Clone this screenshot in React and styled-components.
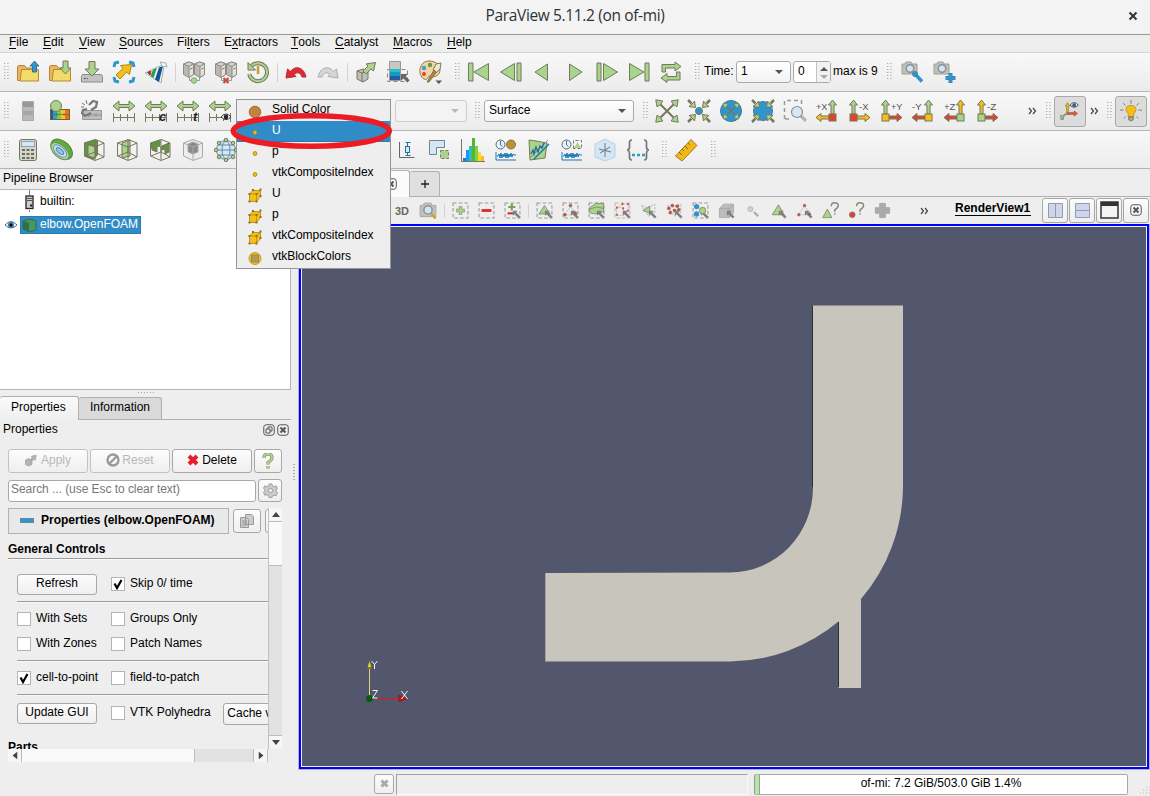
import React from "react";
import styled, { createGlobalStyle, css } from "styled-components";

const GlobalStyle = createGlobalStyle`
  *, *::before, *::after { box-sizing: border-box; }
  body {
    margin: 0;
    background: #eeeeee;
    font-family: "Liberation Sans", Arial, sans-serif;
    font-size: 12px;
    color: #000;
    overflow: hidden;
  }
`;

const G = "#a8d48d";
const S = "#77775b";
const Y = "#f6bf17";
const B = "#2f95cf";
const R = "#dd4433";

/* ---------- layout ---------- */

const Window = styled.div`
  position: relative;
  display: flex;
  flex-direction: column;
  width: 1150px;
  height: 796px;
  overflow: hidden;
  background: #eeeeee;
  white-space: nowrap;
`;

const TitleBar = styled.header`
  display: flex;
  align-items: center;
  justify-content: center;
  position: relative;
  height: 35px;
  flex: none;
  padding-bottom: 4px;
  background: #f3f3f3;
  border-bottom: 1px solid #9a9a8e;
  font: 15.5px "Open Sans", "Noto Sans", sans-serif;
  letter-spacing: -0.36px;
  color: #2c3336;
`;

const CloseGlyph = styled.span`
  position: absolute;
  right: 12px;
  top: 11px;
  display: flex;
`;

const MenuBar = styled.nav`
  display: flex;
  height: 18px;
  flex: none;
  padding-left: 9px;
  gap: 15px;
  line-height: 14px;
  border-bottom: 1px solid #d4d4d4;
`;

const MenuName = styled.span`
  width: ${(p) => p.$w}px;
  u {
    text-decoration: none;
    border-bottom: 1px solid #000;
    display: inline-block;
    height: 14px;
  }
`;

const ToolBar = styled.div`
  display: flex;
  align-items: center;
  height: ${(p) => p.$h || 39}px;
  flex: none;
  background: linear-gradient(#f8f8f8, #ececec);
  border-bottom: 1px solid #b4b4b4;
`;

const Grip = styled.i`
  flex: none;
  width: 5px;
  height: 18px;
  margin: 0 ${(p) => p.$r ?? 4}px 0 ${(p) => p.$l ?? 8}px;
  background: radial-gradient(circle at 0.5px 0.5px, #a8a8a8 0.6px, transparent 0.9px) 0 0 / 3.4px 3px;
`;

const Divider = styled.i`
  flex: none;
  width: 1px;
  height: ${(p) => p.$h || 19}px;
  margin: 0 ${(p) => p.$r ?? 2}px 0 ${(p) => p.$l ?? 3}px;
  background: #d2d2d2;
`;

const Tool = styled.span`
  flex: none;
  display: flex;
  align-items: center;
  justify-content: center;
  width: ${(p) => p.$w || 32}px;
  height: 31px;
  ${(p) =>
    p.$pressed &&
    css`
      background: #dcdcdc;
      border: 1px solid #a9a9a9;
      border-radius: 3px;
    `}
`;

const Spacer = styled.span`
  flex: none;
  width: ${(p) => p.$w}px;
`;

const More = styled.span`
  flex: none;
  width: ${(p) => p.$w || 12}px;
  display: flex;
  justify-content: center;
`;

const Combo = styled.span`
  flex: none;
  display: flex;
  align-items: center;
  justify-content: space-between;
  width: ${(p) => p.$w}px;
  height: 22px;
  padding: 0 ${(p) => p.$pr ?? 7}px 2px 4px;
  border: 1px solid ${(p) => (p.$off ? "#cdcdcd" : "#aaaaaa")};
  border-radius: 3px;
  background: ${(p) => (p.$off ? "#f3f3f3" : "linear-gradient(#fff, #f2f2f2)")};
`;

const Arrow = styled.i`
  width: 0;
  height: 0;
  margin-top: 2px;
  border: 4px solid transparent;
  border-bottom-width: 0;
  border-top-color: ${(p) => p.$c || "#555"};
  ${(p) => p.$up && "transform: rotate(180deg);"}
`;

const Spin = styled.span`
  display: flex;
  width: 38px;
  height: 22px;
  margin: 0 2px;
  border: 1px solid #aaa;
  border-radius: 3px;
  background: #fff;
  line-height: 18px;
  padding-left: 4px;
  justify-content: space-between;
`;

const SpinArrows = styled.span`
  display: flex;
  flex-direction: column;
  align-items: center;
  justify-content: center;
  gap: 2px;
  width: 14px;
  background: #f1f1f1;
  border-left: 1px solid #c4c4c4;
`;

const BarText = styled.span`
  flex: none;
  width: ${(p) => p.$w}px;
  padding-bottom: 2px;
`;

const Work = styled.main`
  display: flex;
  height: 601px;
  flex: none;
`;

const Dock = styled.aside`
  display: flex;
  flex-direction: column;
  width: 298px;
  flex: none;
`;

const DockTitle = styled.div`
  display: flex;
  justify-content: space-between;
  height: ${(p) => p.$h}px;
  padding: ${(p) => p.$pt}px 9px 0 3px;
  line-height: 14px;
  flex: none;
`;

const Tree = styled.div`
  width: 291px;
  height: 201px;
  flex: none;
  background: #fff;
  border: 1px solid #b5b5b5;
  border-left: 0;
`;

const TreeRow = styled.div`
  display: flex;
  align-items: center;
  height: 22px;
  margin-bottom: 2px;
  padding-left: ${(p) => p.$l}px;
`;

const TreeLabel = styled.span`
  display: flex;
  align-items: center;
  height: 18px;
  gap: 3px;
  line-height: 14px;
  ${(p) =>
    p.$on &&
    css`
      width: 121px;
      padding-left: 1px;
      background: #308cc6;
      color: #fff;
      border: 1px solid #2a7cb0;
    `}
  span { padding-bottom: ${(p) => (p.$on ? 3 : 1)}px; }
`;

const Splitter = styled.i`
  width: 18px;
  height: 1px;
  margin: 2px 0 2px 138px;
  flex: none;
  background: repeating-linear-gradient(90deg, #aaa 0 1px, transparent 1px 3px);
`;

const Tabs = styled.div`
  display: flex;
  align-items: flex-end;
  height: 25px;
  width: 291px;
  flex: none;
  border-bottom: 1px solid #b0b0b0;
`;

const Tab = styled.span`
  width: ${(p) => p.$w}px;
  height: ${(p) => (p.$on ? 24 : 22)}px;
  line-height: ${(p) => (p.$on ? 20 : 19)}px;
  padding-left: 11px;
  border: 1px solid #b0b0b0;
  border-bottom: 0;
  border-radius: 3px 3px 0 0;
  background: ${(p) => (p.$on ? "linear-gradient(#fafafa, #efefef)" : "#dadada")};
  ${(p) => (p.$on ? "border-left: 0; margin-bottom: -1px;" : "border-left: 0;")}
`;

const IconPair = styled.span`
  display: flex;
  gap: 2px;
`;

const Row = styled.div`
  display: flex;
  align-items: center;
  gap: ${(p) => p.$gap ?? 3}px;
  height: ${(p) => p.$h}px;
  margin: 0 0 ${(p) => p.$mb || 0}px ${(p) => p.$ml || 0}px;
  flex: none;
`;

const Button = styled.button`
  flex: none;
  display: flex;
  align-items: center;
  justify-content: center;
  gap: ${(p) => p.$gap ?? 3}px;
  width: ${(p) => p.$w}px;
  height: ${(p) => p.$h || 24}px;
  padding: 0 0 ${(p) => p.$pb ?? 1}px;
  border: 1px solid ${(p) => (p.disabled ? "#c2c2c2" : "#a8a8a8")};
  border-radius: 3px;
  background: linear-gradient(#fcfcfc, #efefef);
  font: inherit;
  line-height: 14px;
  color: ${(p) => (p.disabled ? "#b8b8b8" : "#000")};
  overflow: hidden;
`;

const SearchBox = styled.div`
  width: 248px;
  height: 22px;
  border: 1px solid #a8a8a8;
  border-radius: 3px;
  background: #fff;
  padding: 0 2px;
  line-height: 16px;
  letter-spacing: -0.05px;
  color: #777;
`;

const ScrollFrame = styled.div`
  display: grid;
  grid-template: 241px 13px / 260px 14px;
  margin-left: 8px;
`;

const Viewport = styled.div`
  overflow: hidden;
  display: flex;
  flex-direction: column;
`;

const SectionHead = styled.div`
  display: flex;
  flex: none;
  align-items: center;
  gap: 7px;
  width: 221px;
  height: 26px;
  padding: 0 0 2px 11px;
  border: 1px solid #b2b2b2;
  background: #e9e9e9;
  font-weight: bold;
`;

const Heading = styled.div`
  font-weight: bold;
  line-height: 14px;
  flex: none;
  margin-top: ${(p) => p.$mt}px;
`;

const Rule = styled.i`
  flex: none;
  height: 2px;
  margin: ${(p) => p.$t || 0}px 0 ${(p) => p.$b || 0}px ${(p) => p.$l || 0}px;
  border-top: 1px solid #9c9c9c;
  border-bottom: 1px solid #fafafa;
`;

const CheckLabel = styled.label`
  flex: none;
  display: flex;
  align-items: center;
  gap: 5px;
  width: ${(p) => p.$w || 94}px;
  margin-bottom: ${(p) => (p.$up ? 2 : 0)}px;
  line-height: 14px;
  span { padding-bottom: 2px; }
`;

const Box = styled.i`
  flex: none;
  display: flex;
  width: 14px;
  height: 14px;
  border: 1px solid #b4b4b4;
  background: #fff;
`;

const VBar = styled.div`
  display: flex;
  flex-direction: column;
  border-left: 1px solid #c0c0c0;
  background: #e2e2e2;
`;

const HBar = styled.div`
  display: flex;
  border-right: 1px solid #c0c0c0;
  background: #e2e2e2;
`;

const BarEnd = styled.span`
  flex: none;
  width: 13px;
  height: 13px;
  display: flex;
  align-items: center;
  justify-content: center;
  background: #f6f6f6;
  svg { transform: rotate(${(p) => p.$rot}deg); }
`;

const BottomEnd = styled.span`
  margin-top: auto;
  border-top: 1px solid #bcbcbc;
`;

const RightEnd = styled.span`
  margin-left: auto;
  border-left: 1px solid #bcbcbc;
`;

const Thumb = styled.span`
  flex: none;
  width: ${(p) => p.$w}px;
  height: ${(p) => p.$h}px;
  background: #fafafa;
  border: 0 solid #bcbcbc;
  border-width: ${(p) => (p.$vertical ? "1px 0" : "0 1px")};
`;

const Handle = styled.i`
  position: absolute;
  left: 293px;
  top: 464px;
  width: 2px;
  height: 17px;
  background: repeating-linear-gradient(#aaa 0 1px, transparent 1px 3px);
`;

const Center = styled.section`
  display: flex;
  flex-direction: column;
  width: 852px;
`;

const ViewTabs = styled.div`
  display: flex;
  align-items: flex-end;
  height: 28px;
  flex: none;
  border-bottom: 1px solid #b0b0b0;
`;

const ViewTab = styled.span`
  display: flex;
  align-items: center;
  justify-content: ${(p) => (p.$on ? "flex-end" : "center")};
  width: ${(p) => p.$w}px;
  height: ${(p) => (p.$on ? 27 : 25)}px;
  padding-right: ${(p) => (p.$on ? 12 : 0)}px;
  background: ${(p) => (p.$on ? "#fbfbfb" : "#e0e0e0")};
  border: 1px solid #b0b0b0;
  border-bottom: 0;
  border-radius: 3px 3px 0 0;
  ${(p) => (p.$on ? "margin-bottom: -1px;" : "border-left: 0;")}
`;

const ViewBar = styled.div`
  display: flex;
  align-items: center;
  height: 27px;
  flex: none;
  padding-left: 91px;
`;

const ViewName = styled.span`
  flex: none;
  width: 76px;
  margin: 0 11px 4px 23px;
  border-bottom: 1px solid #000;
  font-weight: bold;
  line-height: 14px;
`;

const RenderFrame = styled.div`
  height: 546px;
  border: 1px solid #b4b4b4;
  border-top: 0;
`;

const BlueFrame = styled.div`
  height: 545px;
  border: 2px solid #0000ff;
  background: #52576e;
  outline: 1px solid #f2f2f2;
  outline-offset: -3px;
  svg { display: block; }
`;

const StatusBar = styled.footer`
  display: flex;
  align-items: center;
  height: 26px;
  padding: 2px 0 0 374px;
`;

const StatusField = styled.div`
  width: 352px;
  height: 21px;
  margin: 0 6px 0 2px;
  border: 1px solid #fafafa;
  border-top-color: #a0a0a0;
  border-left-color: #a0a0a0;
`;

const Memory = styled.div`
  width: 373px;
  height: 21px;
  padding-right: 4px;
  border: 1px solid #a8a8a8;
  border-left: 4px solid #b7e2b0;
  border-radius: 2px;
  background: #fff;
  box-shadow: -1px 0 0 #8fa08b, inset 1px 0 0 #8ca887;
  margin-left: 1px;
  text-align: center;
  line-height: 17px;
`;

const Popup = styled.div`
  position: absolute;
  left: 236px;
  top: 99px;
  width: 155px;
  height: 170px;
  border: 1px solid #949494;
  background: #eeeeee;
`;

const Option = styled.div`
  display: flex;
  align-items: center;
  height: 21px;
  padding-left: 10px;
  gap: 9px;
  ${(p) => p.$on && "background: #308cc6; color: #fff; box-shadow: inset 0 -1px #2a7cb0;"}
  span { padding-bottom: 3px; line-height: 14px; letter-spacing: -0.03px; }
`;

const Ring = styled.svg`
  position: absolute;
  left: 229px;
  top: 112px;
`;

/* ---------- drawings ---------- */

const Svg = ({ s = 24, box = 24, children }) => (
  <svg width={s} height={s} viewBox={`0 0 ${box} ${box}`} fill="none" stroke={S} strokeWidth="1">
    {children}
  </svg>
);

const folder = (
  <>
    <path d="M1.500 20.500V6.500l1-1h6l2 2.500h9v3h-13l-2 9.500z" fill="#eeb462" stroke="#b38439" />
    <path d="M5.500 9.500h17v11.500h-18.500z" fill="#f3da69" stroke="#b08d35" />
  </>
);
const server = (x) => (
  <g transform={`translate(${x} 0)`} stroke="#8c8c82">
    <path d="M.5 4l5-2 5 1.500v11L6 17.500l-5.500-3z" fill="#b9b9b2" />
    <path d="M6 6.500l4.500-3v11L6 17.500z" fill="#e6dfe0" />
    <path d="M.5 4L6 6.500l4.500-3-5-1.500z" fill="#d4d4ce" />
    <path d="M7.500 9l2-1" stroke="#666" />
  </g>
);
const rule = (
  <>
    <path d="M1 7l6-5v3.500h10V2l6 5-6 5V8.500H7V12z" fill={G} />
    <path d="M1 18.500h22M1.500 14v9M8.500 15v7M15.500 15v7M22.500 14v9" />
  </>
);
const iconText = (t, x, y, size) => (
  <text x={x} y={y} fill="#222" stroke="none" fontSize={size} fontWeight="bold" fontStyle="italic" fontFamily="Liberation Sans, sans-serif">{t}</text>
);
const eye = (x, y, c = "#222") => (
  <g>
    <path d={`M${x - 5} ${y}q5-6 10 0q-5 5-10 0z`} fill="#fff" stroke="#333" />
    <circle cx={x} cy={y} r="2.300" fill={c} stroke="none" />
  </g>
);
const cube = (
  <path d="M2.500 5l11-3.500L22 5v14l-9 3.500L2.500 18zM2.500 5l10.500 4 9-4M13 9v13M13 1.500V14l-10 4M13 14l9 5" />
);
const dots = (c = "#999") => <rect x="1.500" y="1.500" width="21" height="21" stroke={c} strokeDasharray="5 3" strokeWidth="1.500" />;
const pointer = <path d="M12.500 12.500h7l-2.200 2.200 6 6-2.500 2.500-6-6-2.300 2.300z" stroke="none" fill="#808080" />;
const wave = <path d="M2 14v8h20M3 18h1l1-2 1 4 1-5 1 5 1-4 1 3 1-4 1 5 1-5 1 5 1-4 1 3 1-4 1 4 1-3 1 1h2" stroke="#1874b8" />;
const clock = (
  <g>
    <circle cx="6.500" cy="6.500" r="4.500" fill="#e5f1fb" stroke="#666" />
    <path d="M6.500 3v4l2 1.500" stroke="#2a7ab8" />
  </g>
);
const camera = (
  <g>
    <path d="M1 4h3l1-2h5l1 2h5v10H1z" fill="#c2c2bd" stroke="#9c9c96" />
    <circle cx="9" cy="8.500" r="3.800" fill="#cfe6f7" stroke="#8a9090" strokeWidth="1.500" />
  </g>
);
const lens = (x, y, r, c = "#777") => (
  <g>
    <path d={`M${x + r * 0.7} ${y + r * 0.7}l5 5`} stroke={c} strokeWidth="3" />
    <circle cx={x} cy={y} r={r} fill="#d4e8f8" stroke="#8b8f92" strokeWidth="1.200" />
  </g>
);
const corners = (inward) =>
  [0, 90, 180, 270].map((a) => (
    <g key={a} transform={`rotate(${a} 12 12)`}>
      {inward ? (
        <>
          <path d="M1 1l3.500 3.500" strokeWidth="2.500" />
          <path d="M8.500 8.500L2 7.500l2-1.500 2-2 1.500-2z" fill={G} />
        </>
      ) : (
        <>
          <path d="M12 12L5 5" strokeWidth="2" />
          <path d="M.8.800l7 1.200L5.500 5.500 2 7.800z" fill={G} />
        </>
      )}
    </g>
  ));

/* Camera direction icons: label, vertical arrow, horizontal arrow and origin block */
const Axis = ({ label, left, up, side, box }) => (
  <Svg>
    <g transform={left ? "" : "translate(24 0) scale(-1 1)"}>
      <path d="M16 15V6h-2.500L17.500 1l4 5H19v9z" fill={up} />
      <path d="M14 17H6v-2.500L1 18.500l5 4V20h8z" fill={side} />
      <rect x="14" y="15" width="7" height="7" fill={box} />
    </g>
    <text x={left ? 1 : 12} y="11" fill="#555" stroke="none" fontSize="9.500" textLength={label[0] === "+" ? 11.5 : 9.500} lengthAdjust="spacingAndGlyphs" fontFamily="Liberation Sans, sans-serif">{label}</text>
  </Svg>
);

const icons = {
  open: <>{folder}<path d="M16.500 12V6H14l4.500-5L23 6h-2.500v6z" fill={B} stroke="#3d6f8c" /></>,
  recent: <>{folder}<path d="M15 1h5v7h3l-5.500 6-5.500-6h3z" fill={G} /></>,
  save: (
    <>
      <path d="M2.500 14.500h19l1 2v5.500H1.500v-5.500z" fill="#c2c2c2" stroke="#8c8c8c" />
      <path d="M4 18.500h2M7 18.500h1" stroke="#555" />
      <path d="M9 1.500h6V9h4l-7 7-7-7h4z" fill={G} />
    </>
  ),
  extracts: (
    <>
      <path d="M2 7l1-4 4-1M17 2l4 1 1 4M22 17l-1 4-4 1M7 22l-4-1-1-4" stroke={B} strokeWidth="3" />
      <path d="M19.500 4.500l-2 10-3-2.500L8 19l-4-4 7-6.500-2.500-3z" fill={Y} stroke="#a88420" />
    </>
  ),
  catalyst: (
    <>
      <path d="M1 13L18 5l-2-3 6 1 1 4-3-1-3 17z" fill="#f2f7f6" stroke="#9fb2b2" />
      <path d="M3.500 12.500L7 11l-1 4z" fill="#c8202c" stroke="#c8202c" />
      <path d="M9 9.500l4-1.500-3.500 10-3-2z" fill="#27a04a" stroke="none" />
      <path d="M15 7.500l4-1.500-4 16-4-2.500z" fill="#12528f" stroke="none" />
    </>
  ),
  connect: <>{server(1)}{server(12)}<path d="M7.500 17v3.500h10V17" stroke="#999" /><circle cx="12" cy="20.500" r="2.800" fill={G} stroke="#83a870" /></>,
  disconnect: <>{server(1)}{server(12)}<path d="M7.500 17v3.500h10V17" stroke="#999" /><path d="M9.500 18l5 5m0-5l-5 5" stroke="#c94a40" strokeWidth="2.200" /></>,
  reset: (
    <>
      <path d="M5 6.500A9 9 0 1 1 3.200 14" stroke={S} strokeWidth="4" />
      <path d="M5 6.500A9 9 0 1 1 3.200 14" stroke={G} strokeWidth="2" />
      <path d="M2 2.500v7.500h7.500z" fill={G} />
      <path d="M12 6v8" stroke="#c99a2d" strokeWidth="2.500" />
    </>
  ),
  undo: <path d="M2 18L3.500 9l3 2.500C11 5 20 7 22 17h-4c-1.500-5-5.500-5-8-2.500l2 2z" fill="#e8242c" stroke="#a5343a" />,
  redo: <path d="M22 18L20.500 9l-3 2.500C13 5 4 7 2 17h4c1.500-5 5.500-5 8-2.500l-2 2z" fill="#d5d5d5" stroke="#adadad" />,
  autoApply: (
    <>
      <path d="M3 11l6-2 5 2v8l-5 3-6-3z" fill="#bfbfba" />
      <path d="M3 11l5 2 6-2M8 13v9" />
      <path d="M21.500 2.500l-2 8.500-2.500-2-5 5-3-3 5-5-2-2z" fill={G} />
    </>
  ),
  colormap: (
    <>
      <rect x="1.500" y="9.500" width="20" height="12" stroke="#888" strokeDasharray="4 3" />
      <path d="M3.500 1.500h11v19h-11z" fill="#c7c7c7" stroke="#999" />
      <path d="M4 9h10v4H4z" fill="#28bfc6" stroke="none" />
      <path d="M4 12h10v4H4z" fill="#1697c5" stroke="none" />
      <path d="M4 16h10v4H4z" fill="#285b9e" stroke="none" />
      <path d="M15 14h7l-2.300 2.300 4 4-2.300 2.300-4-4L15 21z" fill="#666" stroke="none" />
    </>
  ),
  palette: (
    <>
      <path d="M11 1C1 1-1 15 6 19c4 2 3-3 6-3 5 2 10-1 10-6 0-6-5-9-11-9z" fill="#f2d6a7" stroke="#8b7654" />
      <circle cx="6" cy="8" r="2.200" fill="#39a2d1" stroke="none" />
      <circle cx="12" cy="5" r="2.200" fill="#6d973e" stroke="none" />
      <circle cx="6" cy="14" r="2" fill={R} stroke="none" />
      <path d="M15 10l3-6 5-1-1 6-4 4z" fill="#f1e9ce" />
      <path d="M9 22l7-12 2.500 2L11 22z" fill="#b88626" />
      <path d="M17.500 20.500h6.500l-3.200 3.500z" fill="#555" stroke="none" />
    </>
  ),
  first: <><path d="M1.500 3h4.500v18H1.500z" fill={G} /><path d="M21.500 3.500v17L7 12z" fill={G} /></>,
  previous: <><path d="M18 3h4v18h-4z" fill={G} /><path d="M15.500 3.500v17L1.500 12z" fill={G} /></>,
  reverse: <path d="M16.500 4v16.500L4 12z" fill={G} />,
  play: <path d="M6.500 4v16.500L19 12z" fill={G} />,
  next: <><path d="M2 3h4v18H2z" fill={G} /><path d="M8.500 3.500v17l14-8.500z" fill={G} /></>,
  last: <><path d="M18 3h4v18h-4z" fill={G} /><path d="M2.500 3.500v17L17 12z" fill={G} /></>,
  loop: <path d="M3 12V4.500h13V2l6 4.500L16 11V8H6.500v4zM21 12v8H8v2.500L2 18l6-4.500v3h9.500V12z" fill={G} />,
  cameraLink: <>{camera}<path d="M14 14l7 7.500" stroke={B} strokeWidth="3.500" /><circle cx="14" cy="14" r="2.500" fill={B} stroke="#3c7fa7" /></>,
  cameraAdd: <>{camera}<path d="M17.500 13v10M12.500 18h10" stroke="#3c7fa7" strokeWidth="4" /><path d="M17.500 13.500v9M13 18h9" stroke={B} strokeWidth="3" /></>,
  legend: (
    <>
      <path d="M6.500 2.500h11v19h-11z" fill="#b9b9b9" stroke="#aaa" />
      <path d="M7 3h10v5H7z" fill="#999" stroke="none" />
      <path d="M7 12h10v4H7z" fill="#a6a6a6" stroke="none" />
    </>
  ),
  editMap: (
    <>
      <path d="M2 10h3v11H2z" fill="#28539d" stroke="none" />
      <path d="M5 10h4v11H5z" fill="#24a7c2" stroke="none" />
      <path d="M9 10h4v11H9z" fill="#89c45b" stroke="none" />
      <path d="M13 10h4v11h-4z" fill="#f2c82b" stroke="none" />
      <path d="M17 10h5v11h-5z" fill="#e67226" stroke="none" />
      <path d="M2.500 10.500h19v10h-19z" stroke="#75603a" />
      <path d="M2 15.500h20M9 14v3M16 14v3" stroke="#75603a" strokeOpacity=".7" />
      <circle cx="8" cy="7" r="5.500" fill={G} />
    </>
  ),
  separateMap: (
    <>
      <path d="M2.500 11.500h19v9h-19z" fill="#bdbdbd" stroke="#999" />
      <path d="M2 16h20M9 14v4M16 14v4" stroke="#929292" />
      <path d="M7 10l-4 1-1 3 3 3 6-3M9 6l4-4 4 1-1 5-5 3" stroke="#777" strokeWidth="2.200" />
      <path d="M2 4l3 2M6 1l1 4M1 8h3" stroke="#777" />
    </>
  ),
  range: rule,
  rangeCustom: <>{rule}{iconText("c", 15, 21.5, 13)}</>,
  rangeTime: <>{rule}{iconText("t", 17, 21.5, 13)}</>,
  rangeVisible: <>{rule}{eye(18, 18)}</>,
  resetCamera: corners(false),
  zoomData: <><circle cx="12" cy="12" r="3.500" fill={B} />{corners(true)}</>,
  resetClosest: <><circle cx="12" cy="12" r="10.500" fill={B} stroke="#477991" /><g transform="translate(3.600 3.600) scale(.7)">{corners(false)}</g></>,
  zoomClosest: <><circle cx="12" cy="12" r="9.500" fill={B} stroke="#477991" />{corners(true)}</>,
  zoomBox: <><path d="M1.500 20V1.500h17V8M2 20h6" stroke="#999" strokeDasharray="4 3" strokeWidth="1.500" />{lens(14, 13, 5.5, "#b2b2b2")}</>,
  orientation: (
    <>
      <path d="M8 16V6H6.500L9 2l2.500 4H10v10z" fill={Y} stroke="#9b823f" />
      <path d="M9 14h8v-2l4 3-4 3v-2H9z" fill="#e75d36" stroke="#a65843" />
      <path d="M9 15l-5 4v3H1v-5l2 1 5-4z" fill={G} />
      {eye(17, 5, "#345aa1")}
    </>
  ),
  light: (
    <>
      <path d="M12 0v4M3.500 3.500L6 6M20.500 3.500L18 6M0 11h4M20 11h4M4 20l2-2M20 20l-2-2" stroke="#777" />
      <path d="M9 18v-3c-4-4-3-9 3-9s7 5 3 9v3z" fill={Y} stroke="#bd922d" />
      <path d="M9.500 18.500h5v3l-2.500 1.500-2.500-1.500z" fill="#aaa" />
    </>
  ),
  calculator: (
    <>
      <rect x="3.500" y="1.500" width="17" height="21" rx="2" fill="#d4d4d0" />
      <rect x="5.500" y="3.500" width="13" height="5" fill="#d1e8fa" stroke="#91a3ad" />
      {[6, 10.5, 15].map((x) => [11, 15, 19].map((y) => <rect key={`${x}-${y}`} x={x} y={y} width="3" height="2" fill="#707051" stroke="none" />))}
    </>
  ),
  contour: (
    <g transform="rotate(42 12 12)">
      <ellipse cx="12" cy="11" rx="12.500" ry="8" fill="#5fae3b" stroke="#587c3b" />
      <ellipse cx="12" cy="13.500" rx="11" ry="6" fill="#a9d69a" stroke="#6f8f55" />
      <ellipse cx="12" cy="13.500" rx="8" ry="4.300" fill="#c5dff0" stroke="#6c9ab5" />
      <ellipse cx="12" cy="13.500" rx="4.500" ry="2" fill="#9cc8e4" stroke="#4a83a2" />
    </g>
  ),
  clip: <><path d="M2.500 5l10-3 3 1v14l-4 4-9-3z" fill="#629440" /><path d="M6 7l8 1-1 12-7-2z" fill={G} />{cube}</>,
  slice: <><path d="M7 5l8-3v16l-8 2z" fill={G} />{cube}</>,
  threshold: <>{cube}<path d="M3 5l9-3v5l-3 2v5l-5-2zM14 8l7-3v9l-4 2v-5l-3 1z" fill="#629440" /></>,
  extract: (
    <g stroke="#aaa">
      <path d="M2.500 5l9.500-3.500L21.500 5v14L12 22.500 2.500 18z" fill="#ececec" />
      <path d="M7 6l5-2 5 2v8l-5 2-5-2z" fill="#8a8a8a" />
      <path d="M2.500 5L12 9l9.500-4M12 9v13" />
    </g>
  ),
  glyph: (
    <>
      <circle cx="12" cy="12" r="9.500" fill="#d4e9f8" stroke="#628aa1" />
      <ellipse cx="12" cy="12" rx="4" ry="9" stroke="#628aa1" />
      <path d="M2 12h20M4 7h16M4 17h16" stroke="#628aa1" />
      {[[12, 2], [2, 12], [22, 12], [12, 22], [5, 5], [19, 5], [5, 19], [19, 19]].map(([x, y]) => <circle key={`${x}-${y}`} cx={x} cy={y} r="1.800" fill={G} />)}
    </>
  ),
  boxPlot: <><path d="M4.500 4v15.500h15" stroke="#666" /><path d="M12.500 4v14M10.500 4.500h5M10.500 17.500h5" stroke="#236f9e" /><rect x="10.500" y="8.500" width="4" height="6" fill="#d2e9fa" stroke="#236f9e" /></>,
  subset: <><path d="M1.500 2.500h15v7h-8v7h-7z" fill="#d3e7f8" stroke="#70868d" /><rect x="12.500" y="12.500" width="8" height="8" fill={G} strokeDasharray="3 2" /></>,
  histogram: (
    <>
      {[["#087ef3", 2, 20, 3], ["#1b93ff", 5, 12, 3], ["#31bfae", 8, 8, 3], ["#54b639", 11, 0, 3], ["#85cf41", 14, 8, 3], ["#f8db28", 17, 14, 3], ["#ffb82d", 20, 18, 3]].map(([c, x, y, w]) => <rect key={x} x={x} y={y} width={w} height={23 - y} fill={c} stroke="none" />)}
      <path d="M.5 1v22.500H24" />
    </>
  ),
  plotTime: <>{clock}{wave}<circle cx="17" cy="6.500" r="4.500" fill="#bd912c" /></>,
  plotLine: (
    <>
      <path d="M2 2l7 1 11 2-2 15-15 2z" fill={G} />
      <path d="M3 20L21 2" stroke="#8f9a6a" />
      <path d="M4 16l2-4 1 4 2-7 2 5 2-6 2 2 2-5" stroke="#216ba0" strokeWidth="1.300" />
      <path d="M7 21L22 6" stroke="#1874b8" strokeWidth="1.500" />
    </>
  ),
  plotSelection: <>{clock}{wave}<path d="M13.500 10.500v-8h8v8z" strokeDasharray="3 2" /><path d="M14 10l3.500-6 3.500 6z" fill={G} stroke="none" /></>,
  probe: <><path d="M2 6l10-5 10 5v13l-10 4-10-4z" fill="#d3e7f8" stroke="#bdd0dd" /><path d="M12 5v14M6 11l12 3M7 15l10-6" stroke="#68777d" /></>,
  python: (
    <>
      <path d="M6 2Q3 2 3.500 6v3q0 3-2.500 3 2.500 0 2.500 4v2Q3 22 6 22M18 2q3 0 2.500 4v3q0 3 2.500 3-2.500 0-2.500 4v2q.5 4-2.500 4" stroke="#777" strokeWidth="1.700" />
      <path d="M6 17h3m2 0h3m2 0h3" stroke="#31a0b9" strokeWidth="2.500" />
    </>
  ),
  ruler: <><path d="M1.500 18L17 1.500l6 6L8 23z" fill="#f0b916" stroke="#a77b21" /><path d="M5 14l3 3M8 11l2 2M11 8l3 3M14 5l2 2" stroke="#91651a" /></>,
};

const Ico = ({ n, s = 24 }) => <Svg s={s}>{icons[n]}</Svg>;

const selectTools = {
  pick: <>{<path d="M1.500 4.500h4l1.500-3h9l1.500 3h5v15h-21z" fill="#c2c2bd" stroke="#9c9c96" />}<path d="M16 15l6 7" stroke="#d0a03a" strokeWidth="3.500" /><circle cx="12" cy="10.500" r="5.500" fill="#cfe6f7" stroke="#8a9090" strokeWidth="2" /></>,
  add: <>{dots()}<path d="M12 6v12M6 12h12" stroke="#7d9a62" strokeWidth="5" /><path d="M12 7v10M7 12h10" stroke={G} strokeWidth="3" /></>,
  sub: <>{dots()}<path d="M5 12h14" stroke="#e12b29" strokeWidth="4" /></>,
  toggle: <>{dots()}<path d="M11 2v10M6 7h10" stroke="#74a25e" strokeWidth="3" /><path d="M5 16h9" stroke="#e12b29" strokeWidth="3" />{pointer}</>,
  cells: <>{dots()}<path d="M4 17L12 5l8 12z" fill={G} />{pointer}</>,
  points: <>{dots()}<path d="M4 18L12 6l8 12z" stroke="#bbb" />{pointer}{[[4, 18], [12, 5], [19, 16]].map(([x, y]) => <circle key={x} cx={x} cy={y} r="2" fill={R} />)}</>,
  cellsThrough: <>{dots()}<path d="M2 8l9-6h11v12l-13 3-7-2z" fill={G} /><path d="M2 10l10-3 10 2" />{pointer}</>,
  pointsThrough: <>{dots("#bbb")}<path d="M4 8l8-5h8v12l-8 4H4zM4 8h9v10" stroke="#bbb" />{[[4, 8], [12, 3], [20, 3], [4, 18], [20, 12], [13, 9]].map(([x, y]) => <circle key={`${x}-${y}`} cx={x} cy={y} r="1.500" fill={R} stroke="none" />)}{pointer}</>,
  polyCells: <><path d="M2 5l8 3 11-5v12l-9 5z" stroke="#999" strokeDasharray="3 2" /><path d="M4 12l10-6v10z" fill={G} />{pointer}</>,
  polyPoints: <><path d="M2 5l8 2 11-4v12l-9 5z" stroke="#999" strokeDasharray="3 2" />{[[4, 9], [9, 5], [12, 12], [6, 15], [16, 6], [18, 11]].map(([x, y]) => <circle key={x} cx={x} cy={y} r="2" fill={R} stroke="#875e52" />)}{pointer}</>,
  block: <>{dots()}{pointer}<circle cx="6.500" cy="6.500" r="3.800" fill={B} stroke="none" /><circle cx="6.500" cy="17" r="3.800" fill={B} stroke="none" /><circle cx="15" cy="12" r="4.500" fill={G} /></>,
  blockOff: <><path d="M2 9l6-6h14v12l-6 7H2z" fill="#bcbcbc" stroke="#a0a0a0" /><path d="M2 9h14v13M16 9l6-6" stroke="#a0a0a0" />{pointer}</>,
  hoverOff: <><circle cx="9" cy="10" r="3.500" fill="#d1d1d1" stroke="#aaa" /><path d="M14 14l6 6" stroke="#aaa" strokeWidth="3" /></>,
  interactCells: <><path d="M3 18L12 4l8 14z" fill={G} />{pointer}</>,
  interactPoints: <><path d="M4 18L12 5l8 13z" stroke="#bbb" />{pointer}{[[4, 18], [12, 5], [19, 17]].map(([x, y]) => <circle key={x} cx={x} cy={y} r="1.800" fill={R} />)}</>,
  hoverCells: <><path d="M1 22L7.500 10 14 22z" fill={G} /><path d="M13 6q0-5 5-5t5 4q0 3-5 6v3m0 2v2" stroke="#888873" strokeWidth="2" /></>,
  hoverPoints: <><circle cx="6" cy="18" r="4" fill={R} /><path d="M12 6q0-5 5-5t5 4q0 3-5 6v3m0 2v2" stroke="#888873" strokeWidth="2" /></>,
  grow: <path d="M8 2h8v6h6v8h-6v6H8v-6H2V8h6z" fill="#aaa" stroke="#999" />,
};

const SmallX = () => (
  <svg width="12" height="12" viewBox="0 0 12 12" fill="none" stroke="#555">
    <rect x=".75" y=".75" width="10.500" height="10.500" rx="2.500" />
    <path d="M3.500 3.500l5 5m0-5l-5 5" strokeWidth="2" />
  </svg>
);
const Chevrons = () => (
  <svg width="9" height="8" viewBox="0 0 9 8" fill="none" stroke="#444" strokeWidth="1.200"><path d="M1 1l2.500 3L1 7M5 1l2.500 3L5 7" /></svg>
);
const Triangle = () => <svg width="8" height="5" viewBox="0 0 8 5"><path d="M0 5l4-5 4 5z" fill="#444" /></svg>;
const Cross = ({ c = "#e6202a", s = 12 }) => (
  <svg width={s} height={s} viewBox="0 0 12 12" stroke={c} strokeWidth="4"><path d="M2 2l8 8M10 2l-8 8" /></svg>
);

const fieldIcons = {
  solid: <circle cx="8" cy="9" r="5.800" fill="#c5813e" stroke="#9c7145" />,
  point: <circle cx="8" cy="8.500" r="1.900" fill={Y} stroke="#b48b1c" />,
  cell: (
    <>
      <path d="M2.500 7L6 3.500h7.500V9.500L9.500 14.500H2.500z" fill={Y} stroke="#c4951c" />
      <path d="M2.500 7h7v7.500M9.500 7l4-3.500" stroke="#c4951c" />
      {[[2.5, 7], [6, 3], [13.5, 2.5], [13.5, 9], [9.5, 14.5], [2.5, 14.5], [9.5, 7]].map(([x, y]) => <rect key={`${x}-${y}`} x={x - 1} y={y - 1} width="2" height="2" fill="#87702d" stroke="none" />)}
    </>
  ),
  block: <><circle cx="8" cy="8.500" r="6" fill={Y} stroke="#c79b32" /><rect x="4.500" y="5" width="7" height="7" fill="#ab9c60" stroke="#9b8b51" /></>,
};

/* ---------- parts ---------- */

const tools = (names, w) => names.map((n) => <Tool key={n} $w={w}><Ico n={n} /></Tool>);

const menus = [["F", "ile", 19], ["E", "dit", 21], ["V", "iew", 25], ["S", "ources", 43], ["", "Fi", 32, "l", "ters"], ["", "E", 52, "x", "tractors"], ["T", "ools", 29], ["C", "atalyst", 43], ["M", "acros", 39], ["H", "elp", 25]];

const fields = [["solid", "Solid Color"], ["point", "U"], ["point", "p"], ["point", "vtkCompositeIndex"], ["cell", "U"], ["cell", "p"], ["cell", "vtkCompositeIndex"], ["block", "vtkBlockColors"]];

const Check = ({ on, w, up, children }) => (
  <CheckLabel $w={w} $up={up}>
    <Box>{on && <svg width="12" height="12" viewBox="0 0 12 12" fill="none" stroke="#000" strokeWidth="2.200"><path d="M2.500 5.500l2.500 4.500L9.500 2" /></svg>}</Box>
    <span>{children}</span>
  </CheckLabel>
);

const Scene = () => (
  <svg width="846" height="541" viewBox="301 226 846 541">
    <path d="M813 305.500H903V487A173 174 0 0 1 861 599V688H838.500V621.500A173 174 0 0 1 730 661.500H545V573L730 572.500A83 85 0 0 0 813 487Z" fill="#c8c5bc" />
    <path d="M812.500 306V487M838.500 622V687" stroke="#2d2f39" />
    <path d="M545.500 573V661" stroke="#a3a29f" />
    <path d="M369.500 697V668" stroke="#d4d27a" />
    <path d="M367 669l2.500-8 2.500 8z" fill="#d9d51b" />
    <path d="M367 668h5" stroke="#222" />
    <path d="M371 698.500H400" stroke="#f01010" />
    <path d="M399 695.500v6l8-3z" fill="#d51616" stroke="#600" strokeWidth=".5" />
    <circle cx="369.500" cy="698.500" r="3.500" fill="#075c12" />
    <g fill="none" stroke="#f4f4f4">
      <path d="M371.500 661l3 3.500 3-3.500M374.500 664v5M372.500 690.500h5l-5 7.500h5M401.500 691l6 8M407.500 691l-6 8" />
    </g>
  </svg>
);

const PropertiesPanel = () => (
  <>
    <Tabs>
      <Tab $on $w={79}>Properties</Tab>
      <Tab $w={83}>Information</Tab>
    </Tabs>
    <DockTitle $h={29} $pt={2}>
      Properties
      <IconPair>
        <svg width="12" height="18" viewBox="0 -2 12 18" fill="none" stroke="#555"><rect x=".75" y=".75" width="10.500" height="10.500" rx="2.500" /><path d="M5 5V3h4v4H7M3 5h4v4H3z" /></svg>
        <svg width="12" height="18" viewBox="0 -2 12 18" fill="none" stroke="#555"><rect x=".75" y=".75" width="10.500" height="10.500" rx="2.500" /><path d="M3.500 3.500l5 5m0-5l-5 5" strokeWidth="2" /></svg>
      </IconPair>
    </DockTitle>
    <Row $h={24} $mb={6} $ml={8} $gap={2}>
      <Button $w={80} $pb={2} $gap={4} disabled>
        <svg width="12" height="13" viewBox="0 0 24 24" fill="#b5b5b5" stroke="#a2a2a2" strokeWidth="1.500"><path d="M1 11l6-3 7 3v9l-7 3-6-3zM22.500 1.500l-2 10-3-2-5 5-3-3 5-5-2-3z" /></svg>Apply
      </Button>
      <Button $w={80} $pb={2} $gap={2} disabled>
        <svg width="14" height="14" viewBox="0 0 14 14" fill="none" stroke="#999" strokeWidth="2.300"><circle cx="7" cy="7" r="5.500" /><path d="M3 11l8-8" /></svg>Reset
      </Button>
      <Button $w={80} $pb={2}><Cross />Delete</Button>
      <Button $w={28}>
        <svg width="12" height="16" viewBox="0 0 12 16" fill="none"><path d="M2 5q0-4 4-4t4 4q0 2-4 4.500v2m0 1.500v2.500" stroke={S} strokeWidth="3" /><path d="M2 5q0-4 4-4t4 4q0 2-4 4.500v2m0 1.500v2.500" stroke={G} strokeWidth="2" /></svg>
      </Button>
    </Row>
    <Row $h={23} $mb={6} $ml={8} $gap={2}>
      <SearchBox>Search ... (use Esc to clear text)</SearchBox>
      <Button $w={24} $h={23}>
        <svg width="15" height="15" viewBox="0 0 16 16" fill="#ccc" stroke="#999"><path d="M6.500 1h3l.5 2 2 1 2-1 1.500 3-1.500 1.500v1.500l1.500 1.500-1.500 3-2-.5-2 1-.5 1.500h-3L6 13.500l-2-1-2 .5-1.500-3L2 8.500V7L.5 5.500 2 3l2 1 2-1z" /><circle cx="8" cy="8" r="2.300" fill="#eee" /></svg>
      </Button>
    </Row>
    <ScrollFrame>
      <Viewport>
        <Row $h={26} $gap={4}>
          <SectionHead>
            <svg width="14" height="5" viewBox="0 0 14 5"><rect x=".5" y=".5" width="13" height="4" fill={B} stroke="#66899b" /></svg>
            Properties (elbow.OpenFOAM)
          </SectionHead>
          <Button $w={28}>
            <svg width="16" height="16" viewBox="0 0 16 16" fill="#ccc" stroke="#999"><path d="M6.500 1.500h6l2 2v8h-8zM1.500 4.500h6l2 2v8h-8zM3 8h5M3 10h5M3 12h4" /></svg>
          </Button>
          <Button $w={28} />
        </Row>
        <Heading $mt={8}>General Controls</Heading>
        <Rule $t={2} $b={14} />
        <Row $h={21} $ml={9} $gap={14}>
          <Button $w={80} $h={21} $pb={3}>Refresh</Button><Check on up>Skip 0/ time</Check>
        </Row>
        <Rule $t={6} $b={8} $l={9} />
        <Row $h={16} $ml={9} $gap={0}><Check>With Sets</Check><Check>Groups Only</Check></Row>
        <Row $h={34} $ml={9} $gap={0}><Check>With Zones</Check><Check>Patch Names</Check></Row>
        <Rule $t={-1} $b={8} $l={9} />
        <Row $h={16} $mb={2} $ml={9} $gap={0}><Check on>cell-to-point</Check><Check>field-to-patch</Check></Row>
        <Rule $t={6} $b={7} $l={9} />
        <Row $h={21} $ml={9} $gap={14}>
          <Button $w={80} $h={21} $pb={3}>Update GUI</Button><Check w={98} up>VTK Polyhedra</Check>
          <Button $w={62} $h={22} $pb={2}>Cache vtk</Button>
        </Row>
        <Heading $mt={16}>Parts</Heading>
      </Viewport>
      <VBar>
        <BarEnd $rot={0}><Triangle /></BarEnd>
        <Thumb $w={13} $h={45} $vertical />
        <BottomEnd><BarEnd $rot={180}><Triangle /></BarEnd></BottomEnd>
      </VBar>
      <HBar>
        <BarEnd $rot={-90}><Triangle /></BarEnd>
        <Thumb $w={174} $h={13} />
        <RightEnd><BarEnd $rot={90}><Triangle /></BarEnd></RightEnd>
      </HBar>
    </ScrollFrame>
  </>
);

const viewTool = (n, s = 17) => <Tool key={n} $w={26}><Svg s={s}>{selectTools[n]}</Svg></Tool>;

const LayoutButtons = () => (
  <Row $h={25} $gap={1}>
    <Button $w={26} $h={25}><svg width="15" height="15" viewBox="0 0 15 15"><path d="M.5.500h14v14H.5zM7.500 1v13" fill="#cfd6ec" stroke="#939bb0" /></svg></Button>
    <Button $w={26} $h={25}><svg width="15" height="15" viewBox="0 0 15 15"><path d="M.5.500h14v14H.5zM1 7.500h13" fill="#cfd6ec" stroke="#939bb0" /></svg></Button>
    <Button $w={26} $h={25}><svg width="19" height="18" viewBox="0 0 19 18"><path d="M1 1h17v16H1z" fill="#f3f3f3" stroke="#333" strokeWidth="1.500" /><path d="M1 1h17v4H1z" fill="#333" /></svg></Button>
    <Button $w={26} $h={25}><SmallX /></Button>
  </Row>
);

export default function App() {
  return (
    <Window>
      <GlobalStyle />
      <TitleBar>
        ParaView 5.11.2 (on of-mi)
        <CloseGlyph><svg width="10" height="10" viewBox="0 0 10 10" stroke="#333" strokeWidth="2"><path d="M1.500 1.500l7 7m0-7l-7 7" /></svg></CloseGlyph>
      </TitleBar>
      <MenuBar>
        {menus.map(([a, b, w, c, d]) => (
          <MenuName key={a + b} $w={w}>{a && <u>{a}</u>}{b}{c && <u>{c}</u>}{d}</MenuName>
        ))}
      </MenuBar>

      <ToolBar>
        <Grip $l={4} $r={3} />
        {tools(["open", "recent", "save", "extracts", "catalyst"])}
        <Divider />
        {tools(["connect", "disconnect", "reset"])}
        <Divider />
        {tools(["undo", "redo"])}
        <Divider />
        {tools(["autoApply", "colormap", "palette"])}
        <Grip $l={9} $r={3} />
        {tools(["first", "previous", "reverse", "play", "next", "last", "loop"])}
        <Grip />
        <BarText $w={32}>Time:</BarText>
        <Combo $w={55}>1<Arrow /></Combo>
        <Spin>0<SpinArrows><Arrow $up /><Arrow $c="#aaa" /></SpinArrows></Spin>
        <BarText $w={46}>max is 9</BarText>
        <Grip $l={8} $r={5} />
        {tools(["cameraLink", "cameraAdd"])}
      </ToolBar>

      <ToolBar>
        <Grip $l={4} $r={3} />
        {tools(["legend", "editMap", "separateMap", "range", "rangeCustom", "rangeTime", "rangeVisible"])}
        <Spacer $w={159} />
        <Combo $w={72} $off><span /><Arrow $c="#bbb" /></Combo>
        <Grip $l={8} />
        <Combo $w={150}>Surface<Arrow /></Combo>
        <Grip $l={9} $r={3} />
        {tools(["resetCamera", "zoomData", "resetClosest", "zoomClosest", "zoomBox"])}
        <Tool><Axis label="+X" left up={G} side={Y} box="#e3402e" /></Tool>
        <Tool><Axis label="-X" up={G} side={Y} box="#e3402e" /></Tool>
        <Tool><Axis label="+Y" up={G} side={R} box={Y} /></Tool>
        <Tool><Axis label="-Y" left up={G} side={R} box={Y} /></Tool>
        <Tool><Axis label="+Z" left up={Y} side={R} box={G} /></Tool>
        <Tool><Axis label="-Z" up={Y} side={R} box={G} /></Tool>
        <Spacer $w={22} />
        <More $w={14}><Chevrons /></More>
        <Grip $l={7} $r={3} />
        <Tool $pressed><Ico n="orientation" s={20} /></Tool>
        <More $w={16}><Chevrons /></More>
        <Grip $l={5} $r={3} />
        <Tool $pressed><Ico n="light" s={22} /></Tool>
      </ToolBar>

      <ToolBar $h={38}>
        <Grip $l={4} $r={3} />
        {tools(["calculator"], 32)}
        {tools(["contour", "clip", "slice", "threshold", "extract", "glyph"], 33)}
        <Spacer $w={148} />
        {tools(["boxPlot", "subset", "histogram", "plotTime", "plotLine", "plotSelection", "probe", "python"], 33)}
        <Grip $l={8} $r={3} />
        {tools(["ruler"])}
        <Grip $l={9} />
      </ToolBar>

      <Work>
        <Dock>
          <DockTitle $h={20} $pt={2}>Pipeline Browser</DockTitle>
          <Tree>
            <TreeRow $l={24}>
              <TreeLabel>
                <svg width="13" height="22" viewBox="0 0 13 22"><path d="M5.500 0v5M5.500 20v2" stroke="#777" /><rect x="2" y="6" width="7" height="12.500" fill="#ccc" stroke="#222" strokeWidth="1.300" /><path d="M3 8.500h5M3 10.500h5" stroke="#555" /><path d="M6 15.500h2" stroke="#222" strokeWidth="2" /></svg>
                <span>builtin:</span>
              </TreeLabel>
            </TreeRow>
            <TreeRow $l={4}>
              <svg width="16" height="14" viewBox="0 -2 16 14" fill="none"><path d="M1 5q6-7 12 0-6 6-12 0z" fill="#fff" stroke="#666" /><circle cx="7" cy="5" r="3" fill="#2284bd" /><circle cx="7" cy="5" r="1.500" fill="#000" /></svg>
              <TreeLabel $on>
                <svg width="15" height="15" viewBox="0 0 15 15"><path d="M1 3l7-2 6 2v9l-6 2-7-3z" fill="#4a9660" stroke="#2f6b49" /><path d="M1 3l6 2v9l-6-3z" fill="#2f7048" /></svg>
                <span>elbow.OpenFOAM</span>
              </TreeLabel>
            </TreeRow>
          </Tree>
          <Splitter />
          <PropertiesPanel />
        </Dock>
        <Center>
          <ViewTabs>
            <ViewTab $on $w={112}><SmallX /></ViewTab>
            <ViewTab $w={30}><svg width="8" height="8" viewBox="0 0 8 8" stroke="#222" strokeWidth="1.300"><path d="M4 0v8M0 4h8" /></svg></ViewTab>
          </ViewTabs>
          <ViewBar>
            <Tool $w={26}><svg width="16" height="14"><text x="1" y="11" fontSize="11" fontWeight="bold" fill="#69695b" textLength="14" fontFamily="Liberation Sans, sans-serif">3D</text></svg></Tool>
            {viewTool("pick", 18)}
            <Divider $h={14} $l={3} $r={2} />
            {["add", "sub", "toggle"].map((n) => viewTool(n))}
            <Divider $h={14} $l={3} $r={2} />
            {["cells", "points", "cellsThrough", "pointsThrough", "polyCells", "polyPoints", "block", "blockOff", "hoverOff", "interactCells", "interactPoints", "hoverCells", "hoverPoints", "grow"].map((n) => viewTool(n))}
            <Spacer $w={21} />
            <More $w={16}><Chevrons /></More>
            <ViewName>RenderView1</ViewName>
            <LayoutButtons />
          </ViewBar>
          <RenderFrame><BlueFrame><Scene /></BlueFrame></RenderFrame>
        </Center>
      </Work>

      <StatusBar>
        <Button $w={20} $h={20}><Cross c="#aaa" s={9} /></Button>
        <StatusField />
        <Memory>of-mi: 7.2 GiB/503.0 GiB 1.4%</Memory>
        <svg width="10" height="12" viewBox="0 0 10 12" fill="none" stroke="#bbb" strokeDasharray="1 2" transform="translate(12 4)"><path d="M0 11h10M3 8h7M6 5h4" /></svg>
      </StatusBar>
      <Handle />

      <Popup>
        {fields.map(([k, t], i) => (
          <Option key={i} $on={i === 1}>
            <Svg s={16} box={16}>{fieldIcons[k]}</Svg>
            <span>{t}</span>
          </Option>
        ))}
      </Popup>
      <Ring width="164" height="39" viewBox="0 0 164 39" fill="none" stroke="#ed1c24" strokeWidth="5.500"><ellipse cx="82.300" cy="19" rx="78" ry="15.200" /></Ring>
    </Window>
  );
}
